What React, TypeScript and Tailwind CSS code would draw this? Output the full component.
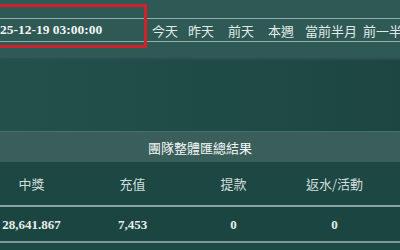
import React from "react";

const cols = [
  { h: "中獎", v: "28,641.867" },
  { h: "充值", v: "7,453" },
  { h: "提款", v: "0" },
  { h: "返水/活動", v: "0" },
];

export default function App() {
  const sans = { fontFamily: '"Noto Sans CJK TC", "Noto Sans", sans-serif' };
  const serif = { fontFamily: '"Liberation Serif", "Noto Sans CJK TC", serif' };
  return (
    <div className="relative w-[400px] h-[250px] overflow-hidden bg-[#1e4945]">
      {/* top filter band */}
      <div className="h-[58px] bg-[#2f5955] pt-[18px]">
        <div className="h-[24px] border-y-[1.5px] border-[#93aea9] flex items-center">
          <div className="w-[146px] shrink-0 pl-[0px] text-[13.5px] font-bold text-[#f2f5f4] leading-none" style={serif}>
            25-12-19 03:00:00
          </div>
          <div className="flex shrink-0 items-center text-[13px] text-[#e2ebe9] leading-none whitespace-nowrap" style={sans}>
            <span className="ml-[6px]">今天</span>
            <span className="ml-[10px]">昨天</span>
            <span className="ml-[14px]">前天</span>
            <span className="ml-[14px]">本週</span>
            <span className="ml-[11px]">當前半月</span>
            <span className="ml-[6px]">前一半月</span>
          </div>
        </div>
      </div>
      <div className="h-[2px] bg-[#2b4b55]" />
      {/* empty area */}
      <div className="h-[71px] bg-gradient-to-r from-[#22514c] to-[#1d4642]" />
      {/* title band */}
      <div className="h-[31px] bg-[#3a5f5b] border-t border-[#44706a] flex items-center">
        <div className="w-[408px] flex justify-center text-[13px] text-[#f4f7f6] leading-none" style={sans}>
          團隊整體匯總結果
        </div>
      </div>
      {/* table */}
      <div className="ml-[-19px] w-[500px]">
        <div className="grid grid-cols-[101px_101px_101px_101px] h-[43px] items-center bg-[#1c4743] text-[13px] text-[#d3dedc]" style={sans}>
          {cols.map((c) => (
            <div key={c.h} className="text-center leading-none">{c.h}</div>
          ))}
        </div>
        <div className="h-[2px] bg-[#8aa6a1]" />
        <div className="grid grid-cols-[101px_101px_101px_101px] h-[34px] items-center bg-[#1b4541] text-[13px] font-bold text-[#e6eceb]" style={serif}>
          {cols.map((c) => (
            <div key={c.h} className="text-center leading-none">{c.v}</div>
          ))}
        </div>
        <div className="h-[2px] bg-[#7e9b96]" />
      </div>
      {/* red annotation box */}
      <div className="absolute left-[-10px] top-[4px] w-[157px] h-[44px] border-[3px] border-[#d0222b]" />
    </div>
  );
}
